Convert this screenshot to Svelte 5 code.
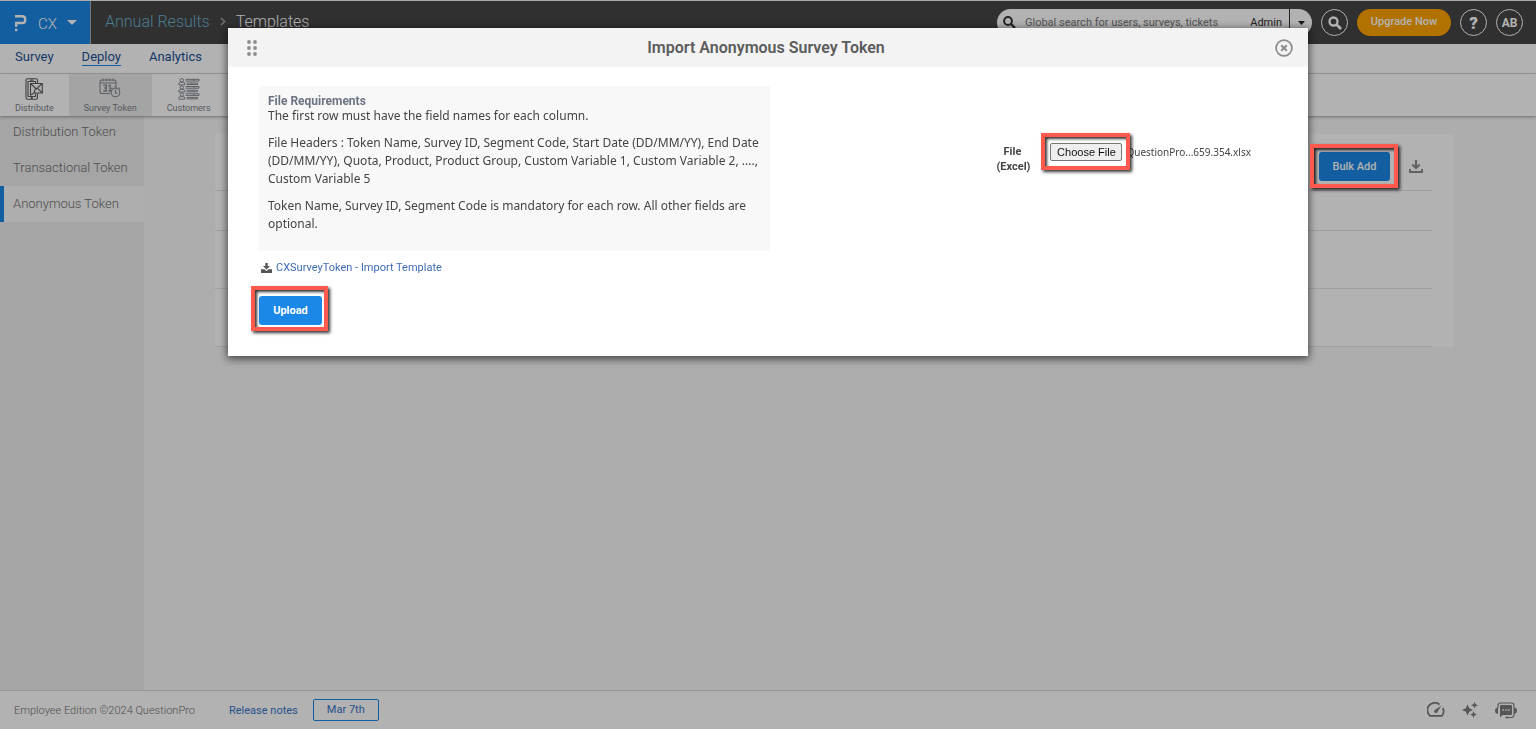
<script>
  const tabs = [
    { label: 'Survey', active: false },
    { label: 'Deploy', active: true },
    { label: 'Analytics', active: false },
  ];
  const tools = [
    { label: 'Distribute', icon: 'distribute', active: false },
    { label: 'Survey Token', icon: 'token', active: true },
    { label: 'Customers', icon: 'customers', active: false },
  ];
  const sections = [
    { label: 'Distribution Token', active: false },
    { label: 'Transactional Token', active: false },
    { label: 'Anonymous Token', active: true },
  ];
  const fileName = 'QuestionPro...659.354.xlsx';
</script>

<div class="page">
  <header class="topbar">
    <button class="product" aria-label="CX">
      <svg class="logo" width="13" height="18" viewBox="0 0 13 18" fill="none" stroke="#fff" stroke-width="2.4">
        <path d="M1 2.200H8.200Q11.200 2.200 11.200 5V6.200Q11.200 9 8.200 9H2.200V12.800" />
        <path d="M2.200 14.800V17.200" />
      </svg>
      <span>CX</span>
      <svg width="10" height="5" viewBox="0 0 10 5"><path d="M0 0H10L5 5Z" fill="#fff" /></svg>
    </button>
    <nav class="crumbs" aria-label="Breadcrumb">
      <a href="#results">Annual Results</a>
      <svg width="6" height="9" viewBox="0 0 6 9" fill="none" stroke="#aaa" stroke-width="1.4"><path d="M1 1L4.600 4.500L1 8" /></svg>
      <span>Templates</span>
    </nav>
    <div class="search">
      <svg width="13" height="13" viewBox="0 0 13 13" fill="none" stroke="#333"><circle cx="5" cy="5" r="3.900" stroke-width="2" /><path d="M8 8L12 12" stroke-width="2.400" /></svg>
      <input type="text" aria-label="Global search" placeholder="Global search for users, surveys, tickets" />
      <span class="scope">Admin</span>
      <button class="scope-menu" aria-label="Search scope">
        <svg width="7" height="4" viewBox="0 0 7 4"><path d="M0 0H7L3.500 4Z" fill="#222" /></svg>
      </button>
    </div>
    <button class="round" aria-label="Search">
      <svg width="14" height="14" viewBox="0 0 14 14" fill="none" stroke="#fff"><circle cx="5.500" cy="5.500" r="4" stroke-width="2.300" /><path d="M8.500 8.500L13 13" stroke-width="2.800" /></svg>
    </button>
    <button class="upgrade">Upgrade Now</button>
    <button class="round help" aria-label="Help">?</button>
    <button class="round">AB</button>
  </header>

  <nav class="tabs" aria-label="Main">
    {#each tabs as t}<a href="#{t.label}" class:active={t.active}>{t.label}</a>{/each}
  </nav>

  <nav class="tools" aria-label="Deploy">
    {#each tools as t}
      <a href="#{t.icon}" class:active={t.active}>
        {#if t.icon === 'distribute'}
          <svg width="18" height="22" viewBox="0 0 18 22" fill="none" stroke="#5c5c5c" stroke-width="1.1">
            <path d="M12.500 5V2.500Q12.500 .8 10.800 .8H2.700Q1 .8 1 2.500V19.500Q1 21.200 2.700 21.200H10.800Q12.500 21.200 12.500 19.500V15.500" />
            <path d="M3 18.500V3.500H10.500V5M3 18.500H10.500V15.500M5 2.100H8.500" />
            <circle cx="6.800" cy="19.900" r=".5" />
            <path d="M5.500 5.500H17.300V15H9L5.500 17Z" fill="#fff" /><path d="M5.500 5.500L11.400 11L17.300 5.500M9 15L10.500 10.200M17.300 15L12.400 10.200" />
          </svg>
        {:else if t.icon === 'token'}
          <svg width="22" height="20" viewBox="0 0 22 20" fill="none" stroke="#858a93" stroke-width="1.100">
            <path d="M11 15.500H3Q1 15.500 1 13.500V4Q1 2 3 2H15Q17 2 17 4V9.500M1 5H17" />
            <path d="M4 .5V3.200M7.300 .5V3.200M10.700 .5V3.200M14 .5V3.200" />
            <path d="M4.300 7.200H7.300V10H5.300M7.300 10V13H4.300M9.300 8L11 7.200V13M9.500 13H12.500" stroke-width="1.300" />
            <circle cx="16.500" cy="14.500" r="4.300" /><path d="M16.500 12V14.800L18.300 15.500M15.300 9H17.700M12 10.800L13.300 9.600M21 10.800L19.700 9.600" />
          </svg>
        {:else}
          <svg width="22" height="22" viewBox="0 0 22 22" fill="none" stroke="#858a93" stroke-width="1">
            {#each [0, 7.2, 14.4] as y}
              <g transform="translate(0 {y})">
                <circle cx="3.800" cy="2.200" r="1.700" /><path d="M.8 6.800V6Q.8 4.200 2.600 4.200H5Q6.800 4.200 6.800 6V6.800Z" />
                <path d="M7.500 1.300H21V3H7.500M8.500 5H19.500V6.500H8.500M16 1.300V3M14 5V6.500" />
              </g>
            {/each}
          </svg>
        {/if}
        <span>{t.label}</span>
      </a>
    {/each}
  </nav>

  <div class="middle">
    <aside>
      {#each sections as s}<a href="#{s.label}" class:active={s.active}>{s.label}</a>{/each}
    </aside>
    <main>
      <section class="panel">
        <div class="panel-head">
          <span class="marked">
            <button class="primary bulk">Bulk Add</button>
            <span class="mark bulk-mark"></span>
          </span>
          <button class="plain" aria-label="Download">
            <svg width="14" height="13" viewBox="0 0 14 13" fill="none" stroke="#8c8c8c" stroke-width="2"><path d="M7 0V7.500M3.300 4.500L7 8L10.700 4.500M1 9V12H13V9" /></svg>
          </button>
        </div>
        <div class="line short"></div>
        <div class="line tall"></div>
        <div class="line tall"></div>
      </section>
    </main>
  </div>

  <footer>
    <span class="edition">Employee Edition ©2024 QuestionPro</span>
    <a href="#notes">Release notes</a>
    <a href="#date" class="date">Mar 7th</a>
    <div class="status">
      <svg width="18" height="16" viewBox="0 0 18 16" fill="none" stroke="#7c7c7c" stroke-width="1.700">
        <path d="M12.500 2.500A7.200 7.200 0 0 0 3 13.800H15A7.200 7.200 0 0 0 15.700 6" />
        <path d="M14.500 3.500L7.500 8.200A1.700 1.700 0 0 0 10 10.500Z" fill="#7c7c7c" stroke="none" />
      </svg>
      <svg width="16" height="16" viewBox="0 0 16 16" fill="#7c7c7c">
        <path d="M5.500 2.500L7.200 6.300L11 8L7.200 9.700L5.500 13.500L3.800 9.700L0 8L3.800 6.300Z" />
        <path d="M12.500 0L13.500 2.300L16 3.300L13.500 4.300L12.500 6.600L11.500 4.300L9 3.300L11.500 2.300Z" />
        <path d="M11.500 9.300L12.500 11.600L15 12.600L12.500 13.600L11.500 16L10.500 13.600L8 12.600L10.500 11.600Z" />
      </svg>
      <svg width="22" height="17" viewBox="0 0 22 17" fill="none" stroke="#7c7c7c">
        <path d="M3 6V3.500Q3 1 5.500 1H16.500Q19 1 19 3.500V13Q19 15.500 16.500 15.500H13" stroke-width="1.100" />
        <path d="M3 5.500Q0 6 0 8.700T3 12ZM19 5.500Q22 6 22 8.700T19 12Z" fill="#7c7c7c" stroke="none" />
        <path d="M5 4Q5 3 6 3H16Q17 3 17 4V12Q17 13 16 13H7.500L5 15.500Z" fill="#7c7c7c" stroke="none" />
        <path d="M7.500 8H9M10.300 8H11.800M13.100 8H14.600" stroke="#fff" stroke-width="1.500" />
        <rect x="10.500" y="14.700" width="3" height="1.600" fill="#7c7c7c" stroke="none" />
      </svg>
    </div>
  </footer>
</div>

<div class="overlay">
  <div class="dialog" role="dialog" aria-modal="true" aria-labelledby="dialog-title">
    <div class="dialog-head">
      <svg width="10" height="16" viewBox="0 0 10 16" fill="#8c8c8c">
        {#each [2, 8, 14] as y}<circle cx="2" cy={y} r="1.900" /><circle cx="8" cy={y} r="1.900" />{/each}
      </svg>
      <h1 id="dialog-title">Import Anonymous Survey Token</h1>
      <button class="plain" aria-label="Close">
        <svg width="18" height="18" viewBox="0 0 18 18" fill="none" stroke="#8c8c8c" stroke-width="1.700"><circle cx="9" cy="9" r="7.900" /><path d="M6.200 6.200L11.800 11.800M11.800 6.200L6.200 11.800" stroke-width="2" /></svg>
      </button>
    </div>
    <div class="dialog-body">
      <div class="columns">
        <div class="requirements">
          <h2>File Requirements</h2>
          <p>The first row must have the field names for each column.</p>
          <p>File Headers : Token Name, Survey ID, Segment Code, Start Date (DD/MM/YY), End Date (DD/MM/YY), Quota, Product, Product Group, Custom Variable 1, Custom Variable 2, ...., Custom Variable 5</p>
          <p>Token Name, Survey ID, Segment Code is mandatory for each row. All other fields are optional.</p>
        </div>
        <div class="file">
          <label for="excel">File<br />(Excel)</label>
          <span class="marked">
            <input id="excel" type="file" />
            <span class="mark file-mark"></span>
          </span>
          <output for="excel">{fileName}</output>
        </div>
      </div>
      <a class="template" href="#template">
        <svg width="11" height="10" viewBox="0 0 11 10" fill="#555"><path d="M4.300 0H6.700V3H9L5.500 6.500L2 3H4.300Z" /><path d="M0 6.300H3.500L5.500 8L7.500 6.300H11V10H0Z" /></svg>
        CXSurveyToken - Import Template
      </a>
      <span class="marked">
        <button class="primary upload">Upload</button>
        <span class="mark upload-mark"></span>
      </span>
    </div>
  </div>
</div>

<style>
  :global(body) { margin: 0; background: #f8f8f8; }
  .page, .overlay { font-family: Roboto, "Noto Sans", sans-serif; font-size: 13px; }
  .page *, .overlay * { box-sizing: border-box; }
  a { text-decoration: none; color: inherit; }
  button, input { font-family: inherit; margin: 0; }
  button { border: 0; padding: 0; cursor: pointer; }
  svg { display: block; flex: none; }
  .plain { background: none; }

  .page { display: flex; flex-direction: column; min-height: 100vh; box-sizing: border-box; border-top: 1px solid #f0f5f2; }
  .topbar { display: flex; align-items: center; height: 43px; padding-right: 13px; background: #454545; }
  .product { display: flex; align-items: center; height: 43px; width: 91px; padding-left: 14px; background: #1b87e6; border-right: 1px solid #aaa; color: #fff; font-size: 15px; font-weight: 300; }
  .product span { margin: 2px 10px 0 11px; }
  .logo { margin-top: 1px; }
  .crumbs { display: flex; align-items: center; gap: 10px; padding: 0 0 2px 14px; color: #fff; font-size: 16px; font-weight: 300; }
  .crumbs a { color: #6db0cc; }
  .search { display: flex; align-items: center; width: 315px; height: 27px; margin-left: auto; padding-left: 6px; background: #fff; border-radius: 14px; color: #333; }
  .search input { flex: 1; min-width: 0; height: 24px; border: 0; padding: 0 0 0 9px; background: none; font-size: 11px; outline: none; }
  .search input::placeholder { color: #777; opacity: 1; }
  .scope { padding-right: 7px; font-size: 11px; }
  .scope-menu { display: flex; align-items: center; height: 27px; width: 23px; padding-left: 8px; border-left: 1px solid #333; background: none; }
  .round { display: flex; align-items: center; justify-content: center; width: 27px; height: 27px; margin-left: 9px; border: 1px solid #fff; border-radius: 50%; background: none; color: #fff; font-size: 12px; font-weight: 700; }
  .help { font-size: 17px; font-weight: 900; }
  .upgrade { width: 94px; height: 27px; margin-left: 9px; border-radius: 14px; background: #ffa400; color: #fff; font-size: 11px; font-weight: 500; padding-bottom: 2px; }

  .tabs { display: flex; gap: 28px; height: 30px; padding: 5px 15px 0; background: #fff; border-bottom: 1px solid #dcdcdc; color: #1b4f93; }
  .tabs a { height: 17px; line-height: 16px; }
  .tabs .active { border-bottom: 1px solid #1b87e6; }
  .tools { display: flex; height: 42px; background: #fff; position: relative; box-shadow: 0 1px 3px rgba(0, 0, 0, .35); color: #7a7f88; font-size: 9px; }
  .tools a { display: flex; flex-direction: column; align-items: center; justify-content: space-between; padding: 4px 15px 2px; line-height: 12px; }
  .tools .active { background: #ebebeb; }

  .middle { display: flex; flex: 1; }
  aside { width: 144px; background: #ececec; color: #707070; font-weight: 300; }
  aside a { display: flex; align-items: center; height: 36px; padding: 0 0 2px 13px; }
  aside a:first-child { height: 34px; padding-bottom: 4px; }
  aside .active { background: #f9f9f9; border-left: 4px solid #1b87e6; padding-left: 9px; }
  main { flex: 1; padding: 18px 82px 0 71px; }
  .panel { padding-right: 22px; background: #fff; }
  .panel-head { display: flex; align-items: center; justify-content: flex-end; gap: 19px; height: 57px; padding: 8px 9px 0 0; border-bottom: 1px solid #e6e6e6; }
  .line { border-bottom: 1px solid #e6e6e6; }
  .short { height: 40px; }
  .tall { height: 58px; }
  .primary { display: block; height: 29px; border-radius: 3px; background: #1b87e6; color: #fff; font-size: 11px; }
  .bulk { width: 71px; font-weight: 500; }
  .upload { width: 63px; font-weight: 700; }

  footer { display: flex; align-items: center; height: 39px; padding: 0 19px 0 14px; background: #fff; border-top: 1px solid #d8d8d8; font-size: 11px; color: #3673c8; }
  .edition { width: 215px; color: #707070; font-weight: 300; }
  .date { margin-left: 15px; width: 66px; height: 22px; line-height: 19px; border: 1px solid #1b87e6; border-radius: 2px; text-align: center; }
  .status { display: flex; align-items: center; gap: 17px; margin-left: auto; }

  .overlay { position: fixed; inset: 0; display: flex; align-items: flex-start; justify-content: center; padding: 28px 24px; background: rgba(0, 0, 0, .3); box-sizing: border-box; }
  .dialog { width: 100%; max-width: 1080px; background: #fff; box-shadow: 0 2px 8px 1px rgba(0, 0, 0, .6); color: #444; }
  .dialog-head { display: flex; align-items: center; justify-content: space-between; height: 39px; padding: 0 15px 0 19px; background: #f3f3f3; }
  h1 { margin: 0; font-size: 16px; font-weight: 600; color: #5c5c5c; }
  .dialog-body { padding: 19px 31px 31px; }
  .columns { display: flex; align-items: flex-start; justify-content: space-between; }
  .requirements { flex: 0 1 511px; min-height: 165px; padding: 9px; background: #f8f8f8; font-family: "Noto Sans", sans-serif; font-size: 12px; line-height: 18px; }
  h2 { margin: 0; font: 700 12px/12px Roboto, sans-serif; color: #6b7280; }
  p { margin: 0 0 9px; }
  .file { display: flex; align-items: center; margin: 57px 26px 0 0; font-size: 11px; }
  .file label { width: 32px; margin-right: 22px; line-height: 15px; font-weight: 700; text-align: center; }
  .file output { margin: 0 0 14px 4px; font-family: "Noto Sans", sans-serif; font-size: 10px; }
  .file .marked { margin-bottom: 14px; }
  input[type="file"] { display: block; width: 72px; height: 18px; overflow: hidden; color: transparent; }
  input[type="file"]::file-selector-button { width: 72px; height: 18px; margin: 0; padding: 0; border: 1px solid #767676; border-radius: 2px; background: #efefef; color: #111; font: 11px/14px "Liberation Sans", sans-serif; }
  .template { display: flex; align-items: center; width: fit-content; gap: 4px; margin: 9px 0 21px 2px; line-height: 15px; font-size: 11px; color: #3f6db5; }
  .marked { position: relative; display: block; width: fit-content; }
  .mark { position: absolute; z-index: 2; border: 4px solid #ff5a4d; pointer-events: none; box-shadow: 2px 2px 3px rgba(0, 0, 0, .8), inset 2px 2px 3px rgba(0, 0, 0, .8); }
  .bulk-mark { inset: -8px -8px -7px -9px; }
  .upload-mark { inset: -10px -6px -6px -8px; }
  .file-mark { inset: -10px -8px -9px -9px; }
</style>
